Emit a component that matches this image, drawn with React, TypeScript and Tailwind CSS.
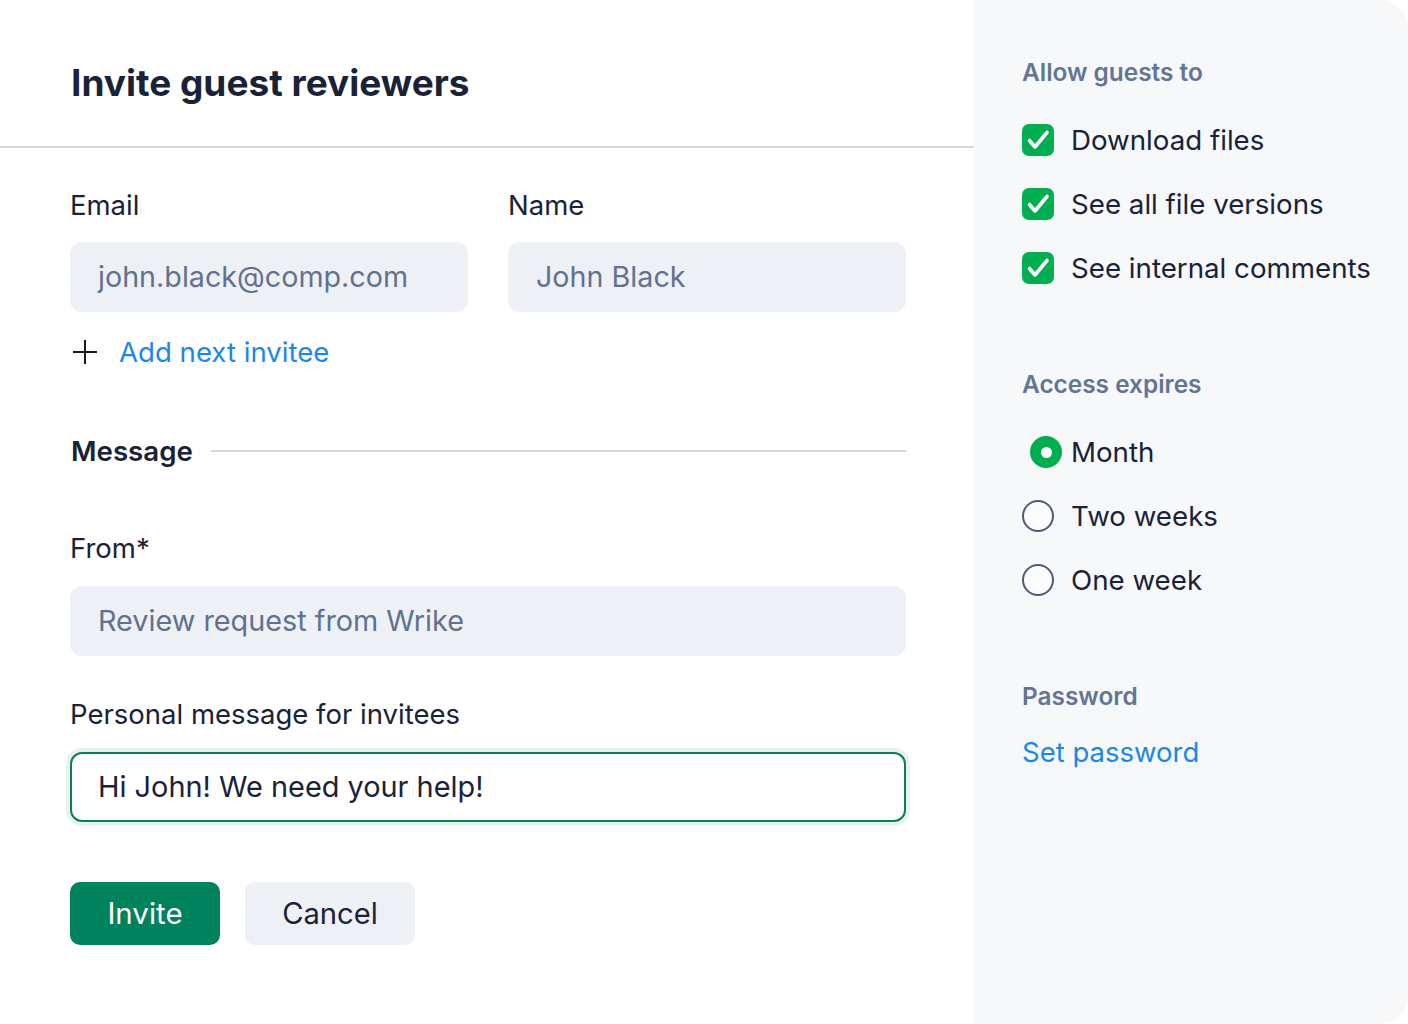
import React from "react";

const font = { fontFamily: "Inter, 'Noto Sans', sans-serif" };

function Check() {
  return (
    <div className="w-[32px] h-[32px] rounded-[7px] bg-[#00ad50] shrink-0">
      <svg width="32" height="32" viewBox="0 0 32 32" fill="none">
        <path d="M7.5 16.5 L13 23 L25 8.5" stroke="white" strokeWidth="3.6" strokeLinecap="round" strokeLinejoin="round" />
      </svg>
    </div>
  );
}

function CheckRow({ label }: { label: string }) {
  return (
    <div className="flex items-center h-[32px]">
      <div className="w-[49px] shrink-0">
        <Check />
      </div>
      <span className="text-[27.7px] leading-[32px] text-[#1a2238]">{label}</span>
    </div>
  );
}

function RadioRow({ label, selected }: { label: string; selected?: boolean }) {
  return (
    <div className="flex items-center h-[32px]">
      <div className="w-[49px] shrink-0 flex">
        {selected ? (
          <div className="ml-[8px] w-[32px] h-[32px] rounded-full bg-[#00ad50] flex items-center justify-center">
            <div className="w-[11px] h-[11px] rounded-full bg-white" />
          </div>
        ) : (
          <div className="w-[32px] h-[32px] rounded-full border-2 border-[#4c5a79] bg-[#fbfcfd]" />
        )}
      </div>
      <span className="text-[27.7px] leading-[32px] text-[#1a2238]">{label}</span>
    </div>
  );
}

export default function App() {
  return (
    <div className="w-[1408px] h-[1024px] flex bg-white" style={font}>
      <div className="w-[974px] shrink-0 flex flex-col">
        <div className="h-[146px] pt-[60px] pl-[71px]">
          <h1 className="text-[37px] leading-[46px] font-bold text-[#1a2238]">Invite guest reviewers</h1>
        </div>
        <div className="h-[2px] bg-[#d3d8e2]" />
        <div className="pl-[70px] pt-[41px] w-[906px]">
          <div className="grid grid-cols-2 gap-x-[40px]">
            <div className="flex flex-col">
              <label className="text-[27.5px] leading-[32px] text-[#1a2238]">Email</label>
              <div className="mt-[21px] h-[70px] rounded-[12px] bg-[#edf0f5] flex items-center px-[28px] text-[28.7px] text-[#62718e]">john.black@comp.com</div>
            </div>
            <div className="flex flex-col">
              <label className="text-[27.5px] leading-[32px] text-[#1a2238]">Name</label>
              <div className="mt-[21px] h-[70px] rounded-[12px] bg-[#edf0f5] flex items-center px-[28px] text-[28.7px] text-[#62718e]">John Black</div>
            </div>
          </div>
          <div className="mt-[24px] flex items-center h-[32px]">
            <svg width="26" height="26" viewBox="0 0 26 26" className="ml-[2px]">
              <path d="M13 1 V25 M1 13 H25" stroke="#1a1a1a" strokeWidth="2" />
            </svg>
            <span className="ml-[21px] text-[27.6px] leading-[32px] text-[#1b87eb]">Add next invitee</span>
          </div>
          <div className="mt-[67px] flex items-center h-[32px]">
            <span className="text-[27.7px] leading-[32px] font-semibold text-[#1a2238] ml-[1px]">Message</span>
            <div className="ml-[18px] flex-1 h-[2px] bg-[#d3d8e2]" />
          </div>
          <label className="block mt-[65px] text-[27.5px] leading-[32px] text-[#1a2238]">From*</label>
          <div className="mt-[22px] h-[70px] rounded-[12px] bg-[#edf0f5] flex items-center px-[28px] text-[28.8px] text-[#62718e]">Review request from Wrike</div>
          <label className="block mt-[42px] text-[27.5px] leading-[32px] text-[#1a2238]">Personal message for invitees</label>
          <div className="mt-[22px] h-[70px] rounded-[12px] border-2 border-[#0a7d5c] ring-4 ring-[#e5f2ee] bg-white flex items-center px-[26px] text-[28.9px] text-[#1a2238]">Hi John! We need your help!</div>
          <div className="mt-[60px] flex gap-[25px]">
            <button className="h-[63px] w-[150px] rounded-[10px] bg-[#00825c] text-white text-[29.5px]">Invite</button>
            <button className="h-[63px] w-[170px] rounded-[10px] bg-[#edf0f5] text-[#1a2238] text-[29.2px]">Cancel</button>
          </div>
        </div>
      </div>
      <div className="flex-1 bg-[#f7f8fa] rounded-tr-[28px] rounded-br-[28px] pl-[48px] pt-[57px] flex flex-col">
        <h2 className="text-[24.4px] leading-[30px] font-semibold text-[#637594]">Allow guests to</h2>
        <div className="mt-[37px] flex flex-col gap-[32px]">
          <CheckRow label="Download files" />
          <CheckRow label="See all file versions" />
          <CheckRow label="See internal comments" />
        </div>
        <h2 className="mt-[85px] text-[24.4px] leading-[30px] font-semibold text-[#637594]">Access expires</h2>
        <div className="mt-[37px] flex flex-col gap-[32px]">
          <RadioRow label="Month" selected />
          <RadioRow label="Two weeks" />
          <RadioRow label="One week" />
        </div>
        <h2 className="mt-[85px] text-[24.4px] leading-[30px] font-semibold text-[#637594]">Password</h2>
        <span className="mt-[24px] text-[27.5px] leading-[34px] text-[#1b87eb]">Set password</span>
      </div>
    </div>
  );
}
